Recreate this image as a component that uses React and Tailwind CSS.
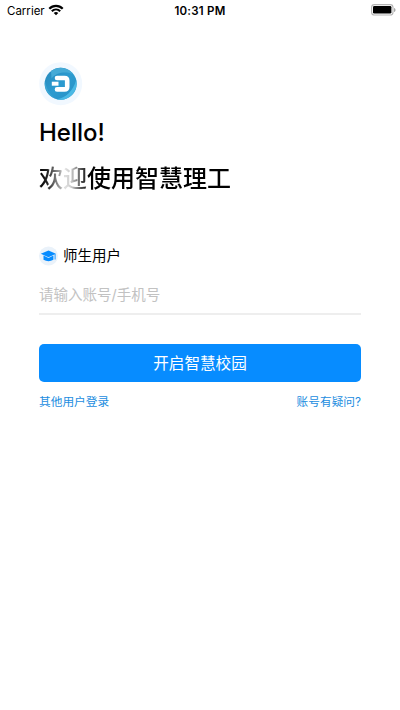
import React from "react";

function WifiIcon() {
  return (
    <svg width="16" height="12" viewBox="0 0 16 12" fill="none" stroke="#000" strokeWidth="2.2" className="-ml-[1px] -mt-[1px]">
      <path d="M1.3 4.7C5 0.9 11 0.9 14.7 4.7" />
      <path d="M3.8 7.2C6.2 4.9 9.8 4.9 12.2 7.2" />
      <path d="M8 11.2L5.7 8.9C7 7.7 9 7.7 10.3 8.9Z" fill="#000" stroke="none" />
    </svg>
  );
}

function BatteryIcon() {
  return (
    <svg width="25" height="12" viewBox="0 0 25 12" className="-mt-[1px]">
      <rect x="0.6" y="0.6" width="21.4" height="10.4" rx="2.8" fill="#fff" stroke="#b4b4b4" strokeWidth="1.1" />
      <rect x="2" y="2" width="18.4" height="7.6" rx="1.3" fill="#000" />
      <path d="M23 4v4c1-.3 1.5-1.100 1.500-2s-.5-1.700-1.500-2z" fill="#a8a8a8" />
    </svg>
  );
}

function Logo() {
  return (
    <svg width="44" height="44" viewBox="0 0 44 44" className="block">
      <defs>
        <linearGradient id="disc" x1="0" y1="0" x2="1" y2="1">
          <stop offset="0" stopColor="#2587bb" />
          <stop offset="0.5" stopColor="#2c9bd0" />
          <stop offset="1" stopColor="#278fc4" />
        </linearGradient>
      </defs>
      <circle cx="21.700" cy="21.700" r="21.500" fill="#f1f8ff" />
      <circle cx="21.700" cy="21.700" r="16" fill="url(#disc)" />
      <path d="M12 9A16 16 0 0 1 34.500 12.200C28 9.500 18 9.500 12.500 16.500Z" fill="#45aad6" />
      <path d="M37.200 18A16 16 0 0 1 17.700 37.200C27 36 34 29 37.200 18Z" fill="#4ab9e5" />
      <path d="M5.900 19A16 16 0 0 0 16 36.600C10 32 7.500 26 5.900 19Z" fill="#3ca5d3" />
      <path d="M18 16H25.500Q28.200 16 28.200 18.500V24.900Q28.200 27.400 25.500 27.400H18" fill="none" stroke="#fff" strokeWidth="4.600" strokeLinejoin="round" strokeLinecap="round" />
      <path d="M12.800 21.700H19.500" fill="none" stroke="#fff" strokeWidth="4" />
    </svg>
  );
}

function CapIcon() {
  return (
    <svg width="20" height="20" viewBox="0 0 20 20" className="block">
      <circle cx="9.500" cy="10" r="9.500" fill="#eaf2fa" />
      <path d="M1.800 7.800L9.500 4.500L16.900 7.800L9.500 11.200Z" fill="#078cff" />
      <path d="M4.500 9.600L9.500 11.900L14.400 9.600V13.800Q9.500 16.500 4.500 13.800Z" fill="#078cff" />
      <path d="M16.100 8V13.500" stroke="#078cff" strokeWidth="0.9" />
    </svg>
  );
}

export default function App() {
  return (
    <div className="h-[710px] w-[400px] overflow-hidden bg-white font-['Inter','Noto_Sans_CJK_SC',sans-serif] text-black">
      <header className="grid h-[21px] grid-cols-3 items-center pl-[5px] pr-[5px]">
        <div className="flex items-center gap-[4px] pl-[2px]">
          <span className="text-[11.500px] leading-[20px]">Carrier</span>
          <WifiIcon />
        </div>
        <div className="text-center text-[11.500px] leading-[20px] font-semibold tracking-[0.25px] whitespace-nowrap">10:31 PM</div>
        <div className="-mr-[1px] flex justify-end">
          <BatteryIcon />
        </div>
      </header>

      <main className="px-[39px] pt-[41px]">
        <Logo />
        <h1 className="mt-[9px] text-[24px] leading-[36px] font-medium">Hello!</h1>
        <h2 className="mt-[10px] w-[192px] bg-[linear-gradient(90deg,#000_0px,#222_8px,#999_20px,#e0e0e0_26px,#ccc_32px,#555_42px,#000_50px)] bg-clip-text text-[24px] leading-[36px] font-medium whitespace-nowrap text-transparent">
          欢迎使用智慧理工
        </h2>

        <div className="mt-[48px] flex h-[22px] items-center gap-[4px]">
          <CapIcon />
          <span className="text-[14.500px] leading-[22px]">师生用户</span>
        </div>
        <div className="mt-[8px] flex h-[40px] items-center border-b-2 border-[#eeeeee]">
          <span className="pt-[2px] text-[14.500px] leading-[22px] text-[#c2c2c2]">请输入账号/手机号</span>
        </div>

        <button className="mt-[28.500px] block h-[38.500px] w-full rounded-[5px] bg-[#078cff] pt-[1px] text-[15.600px] leading-[38px] text-white">
          开启智慧校园
        </button>
        <div className="mt-[11px] flex justify-between text-[11.700px] leading-[18px] text-[#1c8de0]">
          <a>其他用户登录</a>
          <a>账号有疑问?</a>
        </div>
      </main>
    </div>
  );
}
